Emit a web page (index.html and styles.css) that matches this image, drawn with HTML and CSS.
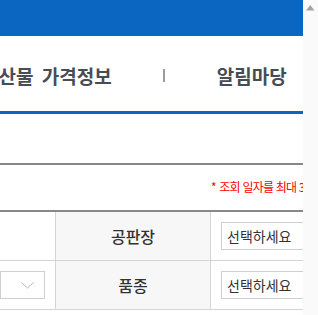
FILE: index.html
```html
<!DOCTYPE html>
<html lang="ko">
  <head>
    <meta charset="UTF-8" />
    <meta name="viewport" content="width=device-width, initial-scale=1.0" />
    <title>농산물 가격정보</title>
    <link rel="stylesheet" href="styles.css">
  </head>
  <body>
    <div class="window">
      <div class="page">
        <div class="top-bar"></div>
        <nav class="gnb">
          <ul class="gnb-list">
            <li class="gnb-item">농산물 가격정보</li>
            <li class="gnb-bar"></li>
            <li class="gnb-item">알림마당</li>
          </ul>
        </nav>
        <div class="search-top"></div>
        <p class="notice"><span class="star">*</span> 조회 일자를 최대 3개월까지 설정할 수 있습니다.</p>
        <div class="search-table">
          <div class="cell"></div>
          <div class="cell head">공판장</div>
          <div class="cell last">
            <div class="select"><span>선택하세요</span></div>
          </div>

          <div class="cell">
            <div class="select">
              <span></span>
              <svg class="chevron" width="13" height="7" viewBox="0 0 13 7">
                <polyline points="0.5,0.5 6.5,6 12.5,0.5" fill="none" stroke="#b4b4b4" stroke-width="1"/>
              </svg>
            </div>
          </div>
          <div class="cell head">품종</div>
          <div class="cell last">
            <div class="select"><span>선택하세요</span></div>
          </div>
        </div>
      </div>
      <div class="scrollbar">
        <svg width="15" height="15" viewBox="0 0 15 15">
          <polygon points="3,10.5 11.5,10.5 7.25,5" fill="#a3a3a3"/>
        </svg>
      </div>
    </div>
  </body>
</html>
```

FILE: styles.css
```css
body {
  margin: 0;
  font-family: "Noto Sans CJK KR", sans-serif;
  color: #333;
}
.window {
  display: flex;
  height: 315px;
  overflow: hidden;
}
.page {
  width: 303px;
  overflow: hidden;
  background-color: #fff;
}
.scrollbar {
  width: 15px;
  background-color: #fafafa;
}
.scrollbar svg {
  display: block;
}
.top-bar {
  height: 36px;
  background-color: #0a66c0;
}
.gnb {
  height: 75px;
  border-bottom: 3px solid #0a66c0;
}
.gnb-list {
  display: flex;
  align-items: center;
  height: 100%;
  margin: 0 0 0 -19px;
  padding: 4px 0 0;
  box-sizing: border-box;
  list-style: none;
  white-space: nowrap;
}
.gnb-item {
  font-size: 19px;
  font-weight: bold;
  color: #474c55;
}
.gnb-item:first-child {
  word-spacing: 3px;
}
.gnb-bar {
  width: 2px;
  height: 13px;
  margin: 0 52px 0 51px;
  background-color: #9c9c9c;
}
.search-top {
  height: 49px;
  border-bottom: 2px solid #888;
}
.notice {
  margin: 0;
  padding: 13px 0 14px 211px;
  font-size: 12px;
  line-height: 18px;
  letter-spacing: -0.8px;
  color: #ff0000;
  white-space: nowrap;
}
.star {
  margin-right: 1px;
}
.search-table {
  display: grid;
  grid-template-columns: 56px 155px 1fr;
  border-top: 2px solid #888;
}
.cell {
  height: 49px;
  padding: 10px 10px 10px 0;
  box-sizing: border-box;
  border-right: 1px solid #d4d4d4;
  border-bottom: 1px solid #d4d4d4;
}
.cell.head {
  display: flex;
  align-items: center;
  justify-content: center;
  padding: 0;
  background-color: #f7f7f7;
  font-size: 16px;
  font-weight: 500;
  color: #333;
}
.cell.last {
  border-right: none;
  padding: 10px 0 10px 10px;
}
.select {
  display: flex;
  align-items: center;
  justify-content: space-between;
  height: 28px;
  padding: 0 10px 0 5px;
  box-sizing: border-box;
  border: 1px solid #cfcfcf;
  background-color: #fff;
  font-size: 14px;
  color: #333;
  white-space: nowrap;
}
.cell.last .select {
  width: 160px;
}
.chevron {
  display: block;
}
```
